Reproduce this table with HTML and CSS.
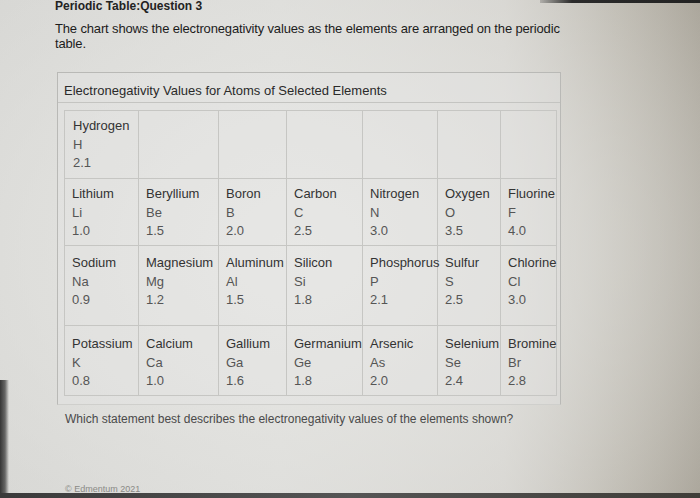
FILE: index.html
```html
<!DOCTYPE html>
<html lang="en">
<head>
<meta charset="utf-8">
<title>Periodic Table: Question 3</title>
<link rel="stylesheet" href="styles.css">
</head>
<body>
<div class="screen">
  <div class="topbar"></div>
  <main class="page">
    <h1 class="title">Periodic Table:Question 3</h1>
    <p class="intro">The chart shows the electronegativity values as the elements are arranged on the periodic table.</p>

    <section class="chart">
      <div class="chart-head">Electronegativity Values for Atoms of Selected Elements</div>
      <table class="grid">
        <colgroup>
          <col class="c1"><col class="c2"><col class="c3"><col class="c4"><col class="c5"><col class="c6"><col class="c7">
        </colgroup>
        <tr class="r1">
          <td><span class="nm">Hydrogen</span><span>H</span><span>2.1</span></td>
          <td></td><td></td><td></td><td></td><td></td><td></td>
        </tr>
        <tr class="r2">
          <td><span class="nm">Lithium</span><span>Li</span><span>1.0</span></td>
          <td><span class="nm">Beryllium</span><span>Be</span><span>1.5</span></td>
          <td><span class="nm">Boron</span><span>B</span><span>2.0</span></td>
          <td><span class="nm">Carbon</span><span>C</span><span>2.5</span></td>
          <td><span class="nm">Nitrogen</span><span>N</span><span>3.0</span></td>
          <td><span class="nm">Oxygen</span><span>O</span><span>3.5</span></td>
          <td><span class="nm">Fluorine</span><span>F</span><span>4.0</span></td>
        </tr>
        <tr class="r3">
          <td><span class="nm">Sodium</span><span>Na</span><span>0.9</span></td>
          <td><span class="nm">Magnesium</span><span>Mg</span><span>1.2</span></td>
          <td><span class="nm">Aluminum</span><span>Al</span><span>1.5</span></td>
          <td><span class="nm">Silicon</span><span>Si</span><span>1.8</span></td>
          <td><span class="nm">Phosphorus</span><span>P</span><span>2.1</span></td>
          <td><span class="nm">Sulfur</span><span>S</span><span>2.5</span></td>
          <td><span class="nm">Chlorine</span><span>Cl</span><span>3.0</span></td>
        </tr>
        <tr class="r4">
          <td><span class="nm">Potassium</span><span>K</span><span>0.8</span></td>
          <td><span class="nm">Calcium</span><span>Ca</span><span>1.0</span></td>
          <td><span class="nm">Gallium</span><span>Ga</span><span>1.6</span></td>
          <td><span class="nm">Germanium</span><span>Ge</span><span>1.8</span></td>
          <td><span class="nm">Arsenic</span><span>As</span><span>2.0</span></td>
          <td><span class="nm">Selenium</span><span>Se</span><span>2.4</span></td>
          <td><span class="nm">Bromine</span><span>Br</span><span>2.8</span></td>
        </tr>
      </table>
    </section>

    <p class="question">Which statement best describes the electronegativity values of the elements shown?</p>
    <p class="footer">© Edmentum 2021</p>
  </main>
  <div class="bottombar"></div>
</div>
</body>
</html>
```

FILE: styles.css
```css
* { box-sizing: border-box; }

html, body {
  margin: 0;
  padding: 0;
  width: 700px;
  height: 498px;
  overflow: hidden;
}

body {
  font-family: "Liberation Sans", Arial, sans-serif;
  color: #2e2e2e;
  background: #d8d8d5;
}

.screen {
  position: relative;
  width: 700px;
  height: 498px;
  overflow: hidden;
  background:
    linear-gradient(90deg, rgba(25,25,25,0.85) 0px, rgba(25,25,25,0.6) 5px, rgba(25,25,25,0) 9px) no-repeat 0 380px / 10px 118px,
    radial-gradient(ellipse 520px 420px at 300px 250px, rgba(232,232,229,1) 0%, rgba(228,228,225,0.6) 55%, rgba(228,228,225,0) 100%),
    linear-gradient(90deg, #d4d4d1 0%, #d9d9d6 40%, #d2d0cb 72%, #bab6ac 88%, #a9a499 100%);
}

.topbar {
  position: absolute;
  top: 0;
  left: 540px;
  width: 160px;
  height: 3px;
  background: linear-gradient(90deg, rgba(40,40,40,0.2), #2b2b2b 20%, #222);
}

.bottombar {
  position: absolute;
  left: 0;
  bottom: 0;
  width: 700px;
  height: 5px;
  background: linear-gradient(90deg, #3a3a3a, #555 50%, #3f3d38);
}

.page {
  padding: 0 0 0 55px;
}

.title {
  margin: -1px 0 0;
  font-size: 12px;
  line-height: 15px;
  font-weight: bold;
  color: #222;
}

.intro {
  margin: 7px 0 0;
  width: 510px;
  font-size: 13px;
  line-height: 15px;
  color: #1c1c1c;
  letter-spacing: -0.15px;
}

.chart {
  margin: 21px 0 0 2px;
  width: 504px;
  height: 333px;
  border: 1px solid #b9b9b6;
  border-bottom-color: #cfcfcc;
  background: rgba(230,230,228,0.35);
}

.chart-head {
  height: 30px;
  padding: 10px 0 0 6px;
  font-size: 13px;
  line-height: 15px;
  color: #2a2a2a;
  border-bottom: 1px solid #c4c4c1;
}

.grid {
  margin: 7px 0 0 6px;
  border-collapse: collapse;
  table-layout: fixed;
  width: 492px;
  font-size: 13px;
}

.c1 { width: 74px; }
.c2 { width: 80px; }
.c3 { width: 68px; }
.c4 { width: 76px; }
.c5 { width: 75px; }
.c6 { width: 63px; }
.c7 { width: 56px; }

.grid td {
  border: 1px solid #c6c6c3;
  vertical-align: top;
  padding: 6px 0 0 7px;
  white-space: nowrap;
  color: #555;
}

.grid td span {
  display: block;
  line-height: 18.5px;
}

.grid td .nm {
  color: #333;
}

.r1 { height: 68px; }
.r2 { height: 67px; }
.r3 { height: 80px; }
.r4 { height: 70px; }

.r3 td { padding-top: 8px; }
.r4 td { padding-top: 9px; }
.r1 td:first-child { padding-left: 8px; }

.question {
  margin: 7px 0 0 10px;
  font-size: 12px;
  line-height: 15px;
  color: #4a4a4a;
}

.footer {
  margin: 57px 0 0 10px;
  font-size: 9px;
  line-height: 10px;
  color: #8a8a86;
}
```
